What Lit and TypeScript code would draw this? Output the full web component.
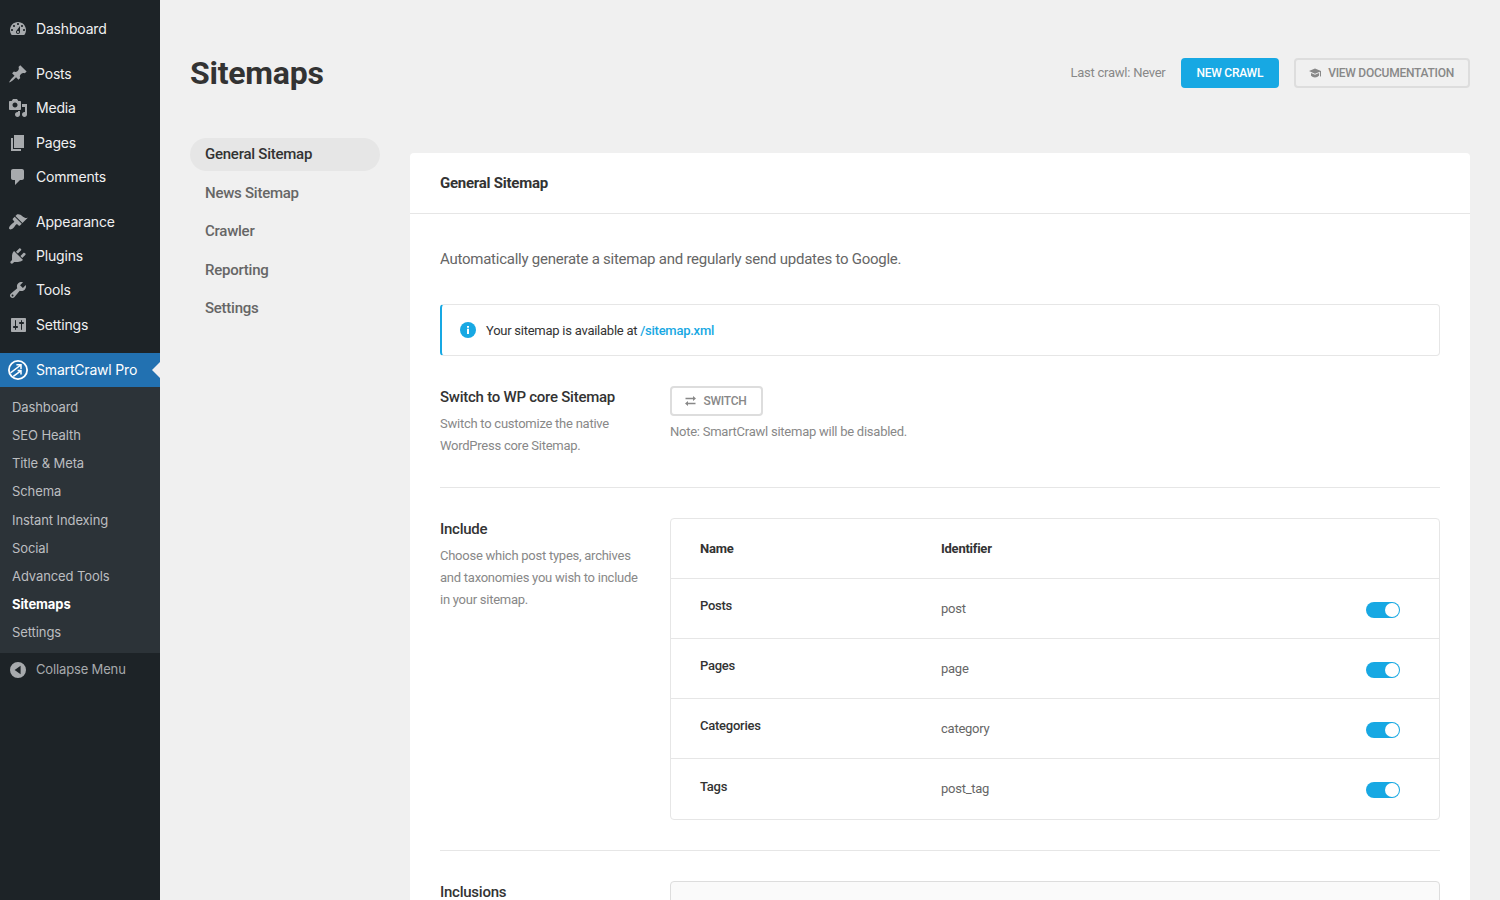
import { LitElement, html, css, svg } from "lit";
import { customElement } from "lit/decorators.js";

const ICONS: Record<string, string> = {
  dashboard:
    "M3.76 16h12.48c1.1-1.37 1.76-3.11 1.76-5 0-4.42-3.58-8-8-8s-8 3.58-8 8c0 1.89.66 3.63 1.76 5zM10 4c.55 0 1 .45 1 1s-.45 1-1 1-1-.45-1-1 .45-1 1-1zM6 6c.55 0 1 .45 1 1s-.45 1-1 1-1-.45-1-1 .45-1 1-1zm8 0c.55 0 1 .45 1 1s-.45 1-1 1-1-.45-1-1 .45-1 1-1zm-5.37 5.55L12 7v6c0 1.1-.9 2-2 2s-2-.9-2-2c0-.57.24-1.08.63-1.45zM4 10c.55 0 1 .45 1 1s-.45 1-1 1-1-.45-1-1 .45-1 1-1zm12 0c.55 0 1 .45 1 1s-.45 1-1 1-1-.45-1-1 .45-1 1-1zm-5 3c0-.55-.45-1-1-1s-1 .45-1 1 .45 1 1 1 1-.45 1-1z",
  post: "M10.44 3.02l1.82-1.82 6.36 6.35-1.83 1.82c-1.05-.68-2.48-.57-3.41.36l-.75.75c-.92.93-1.04 2.35-.35 3.41l-1.83 1.82-2.41-2.41-2.8 2.79c-.42.42-3.38 2.71-3.8 2.29s1.86-3.39 2.28-3.81l2.79-2.79L4.1 9.36l1.83-1.82c1.05.69 2.48.57 3.4-.36l.75-.75c.93-.92 1.05-2.35.36-3.41z",
  media:
    "M13 11V4c0-.55-.45-1-1-1h-1.67L9 1H5L3.67 3H2c-.55 0-1 .45-1 1v7c0 .55.45 1 1 1h10c.55 0 1-.45 1-1zM7 4.5c1.38 0 2.5 1.12 2.5 2.5S8.38 9.5 7 9.5 4.5 8.38 4.5 7 5.62 4.5 7 4.5zM14 6h5v10.5c0 1.38-1.12 2.5-2.5 2.5S14 17.88 14 16.5s1.12-2.5 2.5-2.5c.17 0 .34.02.5.05V9h-3V6zm-4 8.05V13h2v3.5c0 1.38-1.12 2.5-2.5 2.5S7 17.88 7 16.5 8.12 14 9.5 14c.17 0 .34.02.5.05z",
  page: "M6 15V2h10v13H6zm-1 1h8v2H3V5h2v11z",
  comments:
    "M5 2h9c1.1 0 2 .9 2 2v7c0 1.1-.9 2-2 2h-2l-5 5v-5H5c-1.1 0-2-.9-2-2V4c0-1.1.9-2 2-2z",
  appearance:
    "M14.48 11.06L7.41 3.99l1.5-1.5c.5-.56 2.3-.47 3.51.32 1.21.8 1.43 1.28 2.91 2.1 1.18.64 2.45 1.26 4.45.85zm-.71.71L6.7 4.7 4.93 6.47c-.39.39-.39 1.02 0 1.41l1.06 1.06c.39.39.39 1.03 0 1.42-.6.6-1.43 1.11-2.21 1.69-.35.26-.7.53-1.01.84C1.43 14.23.4 16.08 1.4 17.07c.99 1 2.84-.03 4.18-1.36.31-.31.58-.66.85-1.02.57-.78 1.08-1.61 1.69-2.21.39-.39 1.02-.39 1.41 0l1.06 1.06c.39.39 1.02.39 1.41 0z",
  plugins:
    "M13.11 4.36L9.87 7.6 8 5.73l3.24-3.24c.35-.34 1.05-.2 1.56.32.52.51.66 1.21.31 1.55zm-8 1.77l.91-1.12 9.01 9.01-1.19.84c-.71.71-2.63 1.16-3.82 1.16H6.14L4.9 17.26c-.59.59-1.54.59-2.12 0-.59-.58-.59-1.53 0-2.12l1.24-1.24v-3.88c0-1.13.4-3.19 1.09-3.89zm7.26 3.97l3.24-3.24c.34-.35 1.04-.21 1.55.31.52.51.66 1.21.31 1.55l-3.24 3.25z",
  tools:
    "M16.68 9.77c-1.34 1.34-3.3 1.67-4.95.99l-5.41 6.52c-.99.99-2.59.99-3.58 0s-.99-2.59 0-3.57l6.52-5.42c-.68-1.65-.35-3.61.99-4.95 1.28-1.28 3.12-1.62 4.72-1.06l-2.89 2.89 2.82 2.82 2.86-2.87c.53 1.58.18 3.39-1.08 4.65zM3.81 16.21c.4.39 1.04.39 1.43 0 .4-.4.4-1.04 0-1.43-.39-.4-1.03-.4-1.43 0-.39.39-.39 1.03 0 1.43z",
  settings:
    "M18 16V4c0-.55-.45-1-1-1H4c-.55 0-1 .45-1 1v12c0 .55.45 1 1 1h13c.55 0 1-.45 1-1zM8 11h1c.55 0 1 .45 1 1s-.45 1-1 1H8v1.5c0 .28-.22.5-.5.5s-.5-.22-.5-.5V13H6c-.55 0-1-.45-1-1s.45-1 1-1h1V5.5c0-.28.22-.5.5-.5s.5.22.5.5V11zm5-2h-1c-.55 0-1-.45-1-1s.45-1 1-1h1V5.5c0-.28.22-.5.5-.5s.5.22.5.5V7h1c.55 0 1 .45 1 1s-.45 1-1 1h-1v5.5c0 .28-.22.5-.5.5s-.5-.22-.5-.5V9z",
  collapse:
    "M10 2a8 8 0 1 0 0 16 8 8 0 0 0 0-16zM12.6 5.8v8.4L6.6 10z",
};

const icon = (name: string) =>
  html`<svg class="icon" viewBox="0 0 20 20" width="20" height="20">
    ${svg`<path fill="currentColor" fill-rule="evenodd" d=${ICONS[name]} />`}
  </svg>`;

const GROUPS = [
  [["dashboard", "Dashboard"]],
  [
    ["post", "Posts"],
    ["media", "Media"],
    ["page", "Pages"],
    ["comments", "Comments"],
  ],
  [
    ["appearance", "Appearance"],
    ["plugins", "Plugins"],
    ["tools", "Tools"],
    ["settings", "Settings"],
  ],
];

const SUBMENU = [
  "Dashboard",
  "SEO Health",
  "Title & Meta",
  "Schema",
  "Instant Indexing",
  "Social",
  "Advanced Tools",
  "Sitemaps",
  "Settings",
];

@customElement("admin-menu")
class AdminMenu extends LitElement {
  static styles = css`
    :host {
      display: flex;
      flex-direction: column;
      flex: none;
      width: 160px;
      box-sizing: border-box;
      padding-top: 12px;
      background: #1d2327;
      font-family: Inter, sans-serif;
      letter-spacing: -0.18px;
      color: #f0f0f1;
    }
    .icon {
      display: block;
      flex: none;
      color: #a7aaad;
    }
    .group {
      margin-bottom: 11px;
    }
    .item {
      display: flex;
      align-items: center;
      gap: 8px;
      height: 34.2px;
      padding-left: 8px;
      font-size: 14px;
      white-space: nowrap;
    }
    .current {
      position: relative;
      background: #2271b1;
      color: #fff;
    }
    .current .icon {
      color: #fff;
    }
    .current::after {
      content: "";
      position: absolute;
      right: 0;
      top: 9px;
      border: 8px solid transparent;
      border-left-width: 0;
      border-right-color: #f0f0f1;
    }
    .sub {
      background: #2c3338;
      padding: 6px 0;
    }
    .sub-item {
      height: 28.2px;
      line-height: 28.2px;
      padding-left: 12px;
      font-size: 13px;
      letter-spacing: -0.09px;
      color: #bcbec0;
    }
    .sub-item.on {
      color: #fff;
      font-weight: 700;
    }
    .collapse {
      color: #a7aaad;
      font-size: 13px;
      letter-spacing: -0.15px;
    }
    .collapse span {
      padding-bottom: 1px;
    }
  `;

  render() {
    return html`
      ${GROUPS.map(
        (g) => html`<div class="group">
          ${g.map(([i, t]) => html`<div class="item">${icon(i)}<span>${t}</span></div>`)}
        </div>`
      )}
      <div class="item current">
        <svg class="icon" viewBox="0 0 20 20" width="20" height="20" fill="none" stroke="currentColor">
          <circle cx="10" cy="10" r="9.100" stroke-width="1.800" />
          <path stroke-width="1.500" d="M2.500 12.800L12.800 5M5.300 16.400L12.800 10.800M8.400 4.800h4.600v4.200M9.600 10.600h3.400v4" />
        </svg>
        <span>SmartCrawl Pro</span>
      </div>
      <div class="sub">
        ${SUBMENU.map(
          (t) => html`<div class="sub-item ${t === "Sitemaps" ? "on" : ""}"><span>${t}</span></div>`
        )}
      </div>
      <div class="item collapse">${icon("collapse")}<span>Collapse Menu</span></div>
    `;
  }
}

const NAV = ["General Sitemap", "News Sitemap", "Crawler", "Reporting", "Settings"];
const ROWS = [
  ["Posts", "post"],
  ["Pages", "page"],
  ["Categories", "category"],
  ["Tags", "post_tag"],
];

@customElement("app-root")
class AppRoot extends LitElement {
  static styles = css`
    :host {
      display: flex;
      height: 900px;
      overflow: hidden;
      background: #f0f0f0;
      font-family: Roboto, sans-serif;
      font-size: 13px;
      line-height: 22px;
      letter-spacing: -0.25px;
      color: #888;
    }
    .page {
      flex: 1;
      min-width: 0;
      padding: 53px 30px 0;
    }
    .header {
      display: flex;
      align-items: center;
      height: 40px;
    }
    h1 {
      margin: 0;
      flex: 1;
      font-size: 32px;
      line-height: 40px;
      font-weight: 700;
      letter-spacing: -0.25px;
      color: #333;
    }
    .btn {
      display: flex;
      align-items: center;
      box-sizing: border-box;
      height: 30px;
      margin-left: 15px;
      padding: 0 14px;
      border: 2px solid #ddd;
      border-radius: 4px;
      font-size: 12px;
      font-weight: 500;
      line-height: 16px;
      text-transform: uppercase;
      color: #888;
      white-space: nowrap;
    }
    .btn svg {
      display: block;
      margin-right: 7px;
    }
    .btn.docs {
      padding-left: 12.5px;
    }
    .btn.blue {
      border-color: #17a8e3;
      background: #17a8e3;
      color: #fff;
    }
    .columns {
      display: flex;
      gap: 30px;
      margin-top: 45px;
    }
    .nav {
      width: 190px;
      display: flex;
      flex-direction: column;
      gap: 6px;
    }
    .nav-item {
      height: 32.5px;
      line-height: 32.5px;
      border-radius: 20px;
      padding-left: 15px;
      font-size: 15px;
      font-weight: 500;
      color: #666;
    }
    .nav-item.on {
      background: #e6e6e6;
      color: #333;
    }
    .card {
      flex: 1;
      height: 900px;
      margin-top: 15px;
      background: #fff;
      border-radius: 4px;
    }
    .card-head {
      height: 60px;
      line-height: 60px;
      padding: 0 30px;
      border-bottom: 1px solid #e6e6e6;
      font-size: 15px;
      font-weight: 700;
      color: #333;
    }
    .card-body {
      padding: 30px 30px 0;
    }
    .lead {
      height: 30px;
      line-height: 30px;
      font-size: 15px;
      color: #666;
    }
    .notice {
      display: flex;
      align-items: center;
      gap: 10px;
      box-sizing: border-box;
      height: 52px;
      margin: 30px 0;
      padding-left: 18px;
      border: 1px solid #e6e6e6;
      border-left: 2px solid #17a8e3;
      border-radius: 4px;
      color: #333;
    }
    .notice-text {
      padding-top: 2px;
    }
    .link {
      color: #17a8e3;
      font-weight: 500;
    }
    .row {
      display: flex;
    }
    .rule {
      height: 1px;
      background: #e6e6e6;
      margin: 30px 0;
    }
    .label {
      width: 200px;
      margin-right: 30px;
      flex: none;
    }
    .title {
      font-size: 15px;
      font-weight: 500;
      color: #333;
      margin-bottom: 5px;
    }
    .field {
      flex: 1;
    }
    .field .btn {
      display: inline-flex;
      margin: 0;
      padding: 0 14.300px 0 13px;
      vertical-align: top;
    }
    .field .btn svg {
      margin-right: 7.500px;
    }
    .note {
      margin-top: 5px;
    }
    .table {
      border: 1px solid #e6e6e6;
      border-radius: 4px;
      color: #666;
      height: 300px;
    }
    .tr {
      display: grid;
      grid-template-columns: 241px 1fr 34px;
      align-items: center;
      height: 59px;
      padding: 0 39px 0 29px;
    }
    .tr + .tr {
      border-top: 1px solid #e6e6e6;
    }
    .th {
      font-weight: 700;
      color: #333;
    }
    .name {
      font-weight: 500;
      color: #333;
      padding-bottom: 6px;
    }
    .tr:last-child .name {
      padding-bottom: 4px;
    }
    .toggle {
      display: flex;
      justify-content: flex-end;
      align-items: center;
      box-sizing: border-box;
      width: 34px;
      height: 16px;
      margin-top: 2px;
      padding-right: 1px;
      border-radius: 8px;
      background: #17a8e3;
    }
    .knob {
      width: 14px;
      height: 14px;
      border-radius: 50%;
      background: #fff;
    }
    .input {
      height: 100px;
      border: 1px solid #ddd;
      border-radius: 4px;
      background: #fafafa;
    }
  `;

  render() {
    return html`
      <admin-menu></admin-menu>
      <div class="page">
        <div class="header">
          <h1><span>Sitemaps</span></h1>
          <span>Last crawl: Never</span>
          <div class="btn blue"><span>New crawl</span></div>
          <div class="btn docs">
            <svg width="12.500" height="10" viewBox="0 0 12.500 10" fill="#888">
              <path d="M6 .4L0 3l6 2.800L10.900 3.700V6.800q0 1.500.6 2 .8-.6.6-2V3z" />
              <path d="M2 4.900l4 1.800 4-1.800v2.900Q8.300 9.500 6 9.500T2 7.800z" />
            </svg>
            <span>View documentation</span>
          </div>
        </div>
        <div class="columns">
          <div class="nav">
            ${NAV.map(
              (t, i) => html`<div class="nav-item ${i === 0 ? "on" : ""}"><span>${t}</span></div>`
            )}
          </div>
          <div class="card">
            <div class="card-head"><span>General Sitemap</span></div>
            <div class="card-body">
              <div class="lead">
                <span>Automatically generate a sitemap and regularly send updates to Google.</span>
              </div>
              <div class="notice">
                <svg width="16" height="16" viewBox="0 0 16 16">
                  <circle cx="8" cy="8" r="8" fill="#17a8e3" />
                  <path fill="#fff" d="M7 4h2v1.700H7zM7 6.800h2V12H7z" />
                </svg>
                <span class="notice-text">Your sitemap is available at <span class="link">/sitemap.xml</span></span>
              </div>
              <div class="row">
                <div class="label">
                  <div class="title"><span>Switch to WP core Sitemap</span></div>
                  <span>Switch to customize the native WordPress core Sitemap.</span>
                </div>
                <div class="field">
                  <div class="btn">
                    <svg width="11" height="10" viewBox="0 0 11 10" fill="none" stroke="#888" stroke-width="1.300">
                      <path d="M.5 2.500H9M10.500 7.500H2" />
                      <path fill="#888" stroke="none" d="M8 0l3 2.500L8 5zM3 5v5L0 7.500z" />
                    </svg>
                    <span>Switch</span>
                  </div>
                  <div class="note"><span>Note: SmartCrawl sitemap will be disabled.</span></div>
                </div>
              </div>
              <div class="rule"></div>
              <div class="row">
                <div class="label">
                  <div class="title"><span>Include</span></div>
                  <span>Choose which post types, archives and taxonomies you wish to include in your sitemap.</span>
                </div>
                <div class="field">
                  <div class="table">
                    <div class="tr th"><span>Name</span><span>Identifier</span></div>
                    ${ROWS.map(
                      ([n, id]) => html`<div class="tr">
                        <span class="name">${n}</span><span>${id}</span>
                        <div class="toggle"><div class="knob"></div></div>
                      </div>`
                    )}
                  </div>
                </div>
              </div>
              <div class="rule"></div>
              <div class="row">
                <div class="label"><div class="title"><span>Inclusions</span></div></div>
                <div class="field"><div class="input"></div></div>
              </div>
            </div>
          </div>
        </div>
      </div>
    `;
  }
}
